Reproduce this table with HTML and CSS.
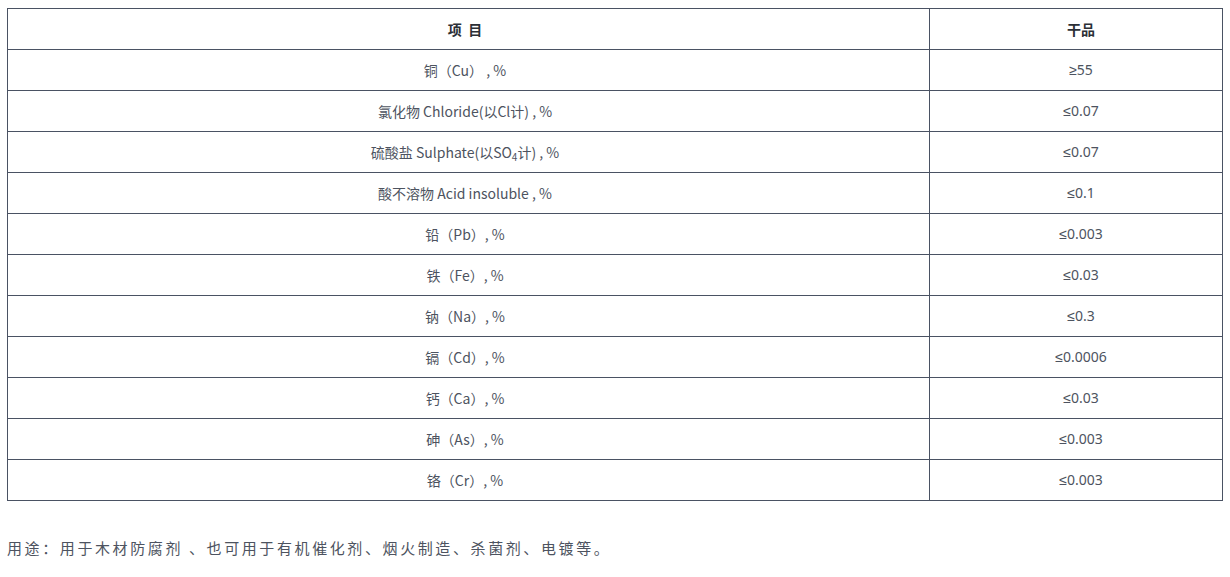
FILE: index.html
```html
<!DOCTYPE html>
<html lang="zh">
<head>
<meta charset="utf-8">
<link rel="stylesheet" href="styles.css">
</head>
<body>
<table class="spec">
  <colgroup><col class="c1"><col class="c2"></colgroup>
  <thead>
    <tr><th class="name">项&nbsp;&nbsp;目</th><th class="val">干品</th></tr>
  </thead>
  <tbody>
    <tr><td class="name">铜（Cu） , %</td><td class="val"><span class="sym">≥</span>55</td></tr>
    <tr><td class="name">氯化物 Chloride(以Cl计) , %</td><td class="val"><span class="sym">≤</span>0.07</td></tr>
    <tr><td class="name">硫酸盐 Sulphate(以SO<sub>4</sub>计) , %</td><td class="val"><span class="sym">≤</span>0.07</td></tr>
    <tr><td class="name">酸不溶物 Acid insoluble , %</td><td class="val"><span class="sym">≤</span>0.1</td></tr>
    <tr><td class="name">铅（Pb）, %</td><td class="val"><span class="sym">≤</span>0.003</td></tr>
    <tr><td class="name">铁（Fe）, %</td><td class="val"><span class="sym">≤</span>0.03</td></tr>
    <tr><td class="name">钠（Na）, %</td><td class="val"><span class="sym">≤</span>0.3</td></tr>
    <tr><td class="name">镉（Cd）, %</td><td class="val"><span class="sym">≤</span>0.0006</td></tr>
    <tr><td class="name">钙（Ca）, %</td><td class="val"><span class="sym">≤</span>0.03</td></tr>
    <tr><td class="name">砷（As）, %</td><td class="val"><span class="sym">≤</span>0.003</td></tr>
    <tr><td class="name">铬（Cr）, %</td><td class="val"><span class="sym">≤</span>0.003</td></tr>
  </tbody>
</table>
<p class="usage">用途：用于木材防腐剂 、也可用于有机催化剂、烟火制造、杀菌剂、电镀等。</p>
</body>
</html>
```
FILE: styles.css
```css
body {
  margin: 8px 0 0 7px;
  background: #fff;
  font-family: "Noto Sans CJK SC", "Noto Sans", sans-serif;
  color: #4d5360;
}
.spec {
  border-collapse: collapse;
  width: 1216px;
  table-layout: fixed;
  font-size: 14px;
}
.c1 { width: 922px; }
.spec th, .spec td {
  border: 1px solid #4a5263;
  height: 39px;
  padding: 0 0 1px;
  text-align: center;
  vertical-align: middle;
  line-height: 20px;
}
.spec .name {
  padding-right: 7px;
}
.spec .val {
  padding-left: 10px;
}
.spec td.val {
  font-family: "Noto Sans", "Noto Sans CJK SC", sans-serif;
}
.spec th {
  font-weight: bold;
  color: #2b2f36;
}
.spec .sym {
  font-family: "Liberation Sans", "DejaVu Sans", sans-serif;
}
.spec sub {
  font-size: 10px;
  line-height: 0;
  vertical-align: -3px;
}
.usage {
  margin: 35px 0 0;
  font-size: 15px;
  letter-spacing: 2.6px;
  line-height: 24px;
}
```
